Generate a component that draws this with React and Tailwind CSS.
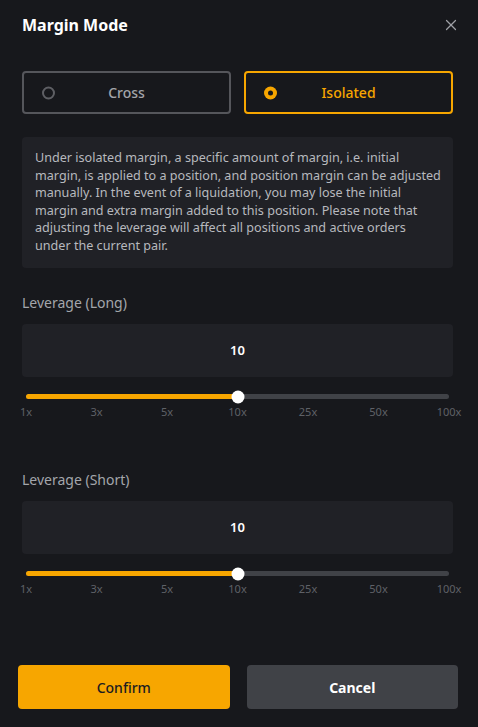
import { X } from "lucide-react";

const MARKS = ["1x", "3x", "5x", "10x", "25x", "50x", "100x"];

const NOTE_LINES = [
  "Under isolated margin, a specific amount of margin, i.e. initial",
  "margin, is applied to a position, and position margin can be adjusted",
  "manually. In the event of a liquidation, you may lose the initial",
  "margin and extra margin added to this position. Please note that",
  "adjusting the leverage will affect all positions and active orders",
  "under the current pair.",
];

function Radio({ active }) {
  if (active) {
    return (
      <span className="flex h-[13px] w-[13px] items-center justify-center rounded-full bg-[#f7a600]">
        <span className="h-[5px] w-[5px] rounded-full bg-[#17181c]" />
      </span>
    );
  }
  return <span className="block h-[13px] w-[13px] rounded-full border-2 border-[#5e5f64]" />;
}

function ModeButton({ label, active }) {
  return (
    <button
      type="button"
      className={`relative flex h-[43px] flex-1 items-center justify-center rounded-[4px] border-2 ${
        active ? "border-[#f7a600] text-[#f7a600]" : "border-[#55565b] text-[#a3a5aa]"
      }`}
    >
      <span className="absolute left-[18px] top-1/2 -translate-y-1/2">
        <Radio active={active} />
      </span>
      <span className="text-[14px] font-medium">{label}</span>
    </button>
  );
}

function LeverageBlock({ title, value, pct }) {
  return (
    <div>
      <p className="text-[14px] leading-5 text-[#a3a6ab]">{title}</p>
      <div className="mt-[11px] flex h-[53px] items-center justify-center rounded-[4px] bg-[#202126]">
        <span className="text-[13px] font-semibold text-white">{value}</span>
      </div>
      <div className="px-1 pt-[17px]">
        <div className="relative h-[5px] rounded-full bg-[#404247]">
          <div className="h-full rounded-full bg-[#f7a600]" style={{ width: `${pct}%` }} />
          <span
            className="absolute top-1/2 h-[13px] w-[13px] -translate-x-1/2 -translate-y-1/2 rounded-full bg-white"
            style={{ left: `${pct}%` }}
          />
        </div>
        <div className="mt-[5px] flex justify-between">
          {MARKS.map((m) => (
            <span key={m} className="flex w-0 justify-center">
              <span className="text-[11px] leading-4 text-[#5f6167]">{m}</span>
            </span>
          ))}
        </div>
      </div>
    </div>
  );
}

export default function App() {
  return (
    <div
      className="flex h-[727px] w-[478px] flex-col bg-[#17181c] pl-[22px] pr-[25px]"
      style={{ fontFamily: '"Noto Sans", "Liberation Sans", sans-serif' }}
    >
      <div className="flex items-center justify-between pt-[13px]">
        <h1 className="text-[16px] font-bold leading-6 text-white">Margin Mode</h1>
        <X size={18} strokeWidth={1.6} className="mr-[-7px] text-[#9ea0a5]" />
      </div>

      <div className="mt-[34px] flex gap-[13px]">
        <ModeButton label="Cross" />
        <ModeButton label="Isolated" active />
      </div>

      <div className="mt-[23px] rounded-[4px] bg-[#202126] px-[13px] pb-[14px] pt-3 text-[12.6px] leading-[17.5px] text-[#b7b9be]">
        {NOTE_LINES.map((line) => (
          <span key={line} className="block whitespace-nowrap">
            {line}
          </span>
        ))}
      </div>

      <div className="mt-[25px]">
        <LeverageBlock title="Leverage (Long)" value="10" pct={50} />
      </div>
      <div className="mt-[50px]">
        <LeverageBlock title="Leverage (Short)" value="10" pct={50} />
      </div>

      <div className="ml-[-4px] mr-[-5px] mt-auto mb-[18px] flex gap-[17px]">
        <button
          type="button"
          className="h-[44px] flex-1 rounded-[4px] bg-[#f7a600] text-[14px] font-medium text-[#1b1c20]"
        >
          Confirm
        </button>
        <button
          type="button"
          className="h-[44px] flex-1 rounded-[4px] bg-[#404247] text-[14px] font-bold text-white"
        >
          Cancel
        </button>
      </div>
    </div>
  );
}
